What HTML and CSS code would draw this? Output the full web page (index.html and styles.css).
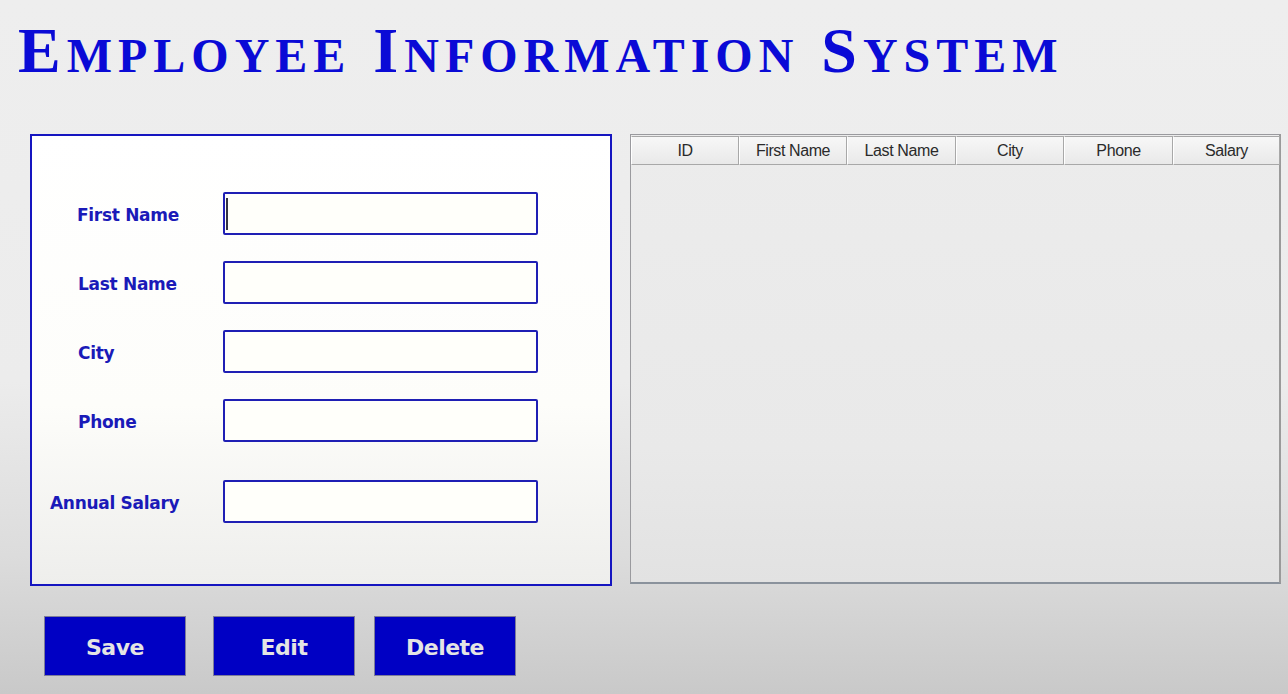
FILE: index.html
```html
<!DOCTYPE html>
<html>
<head>
<meta charset="utf-8">
<link rel="stylesheet" href="styles.css">
</head>
<body>
<h1 class="title"><span class="cap">E</span>mployee <span class="cap">I</span>nformation <span class="cap">S</span>ystem</h1>
<main class="content">
  <section class="form-panel">
    <div class="form-grid">
      <label class="label indent">First Name</label>
      <div class="field"><span class="caret"></span></div>
      <label class="label indent2">Last Name</label>
      <div class="field"></div>
      <label class="label indent2">City</label>
      <div class="field"></div>
      <label class="label indent2">Phone</label>
      <div class="field"></div>
      <label class="label last">Annual Salary</label>
      <div class="field last"></div>
    </div>
  </section>
  <section class="table-panel">
    <div class="thead">
      <div class="th">ID</div>
      <div class="th">First Name</div>
      <div class="th">Last Name</div>
      <div class="th">City</div>
      <div class="th">Phone</div>
      <div class="th">Salary</div>
    </div>
  </section>
</main>
<div class="actions">
  <button class="btn btn-save">Save</button>
  <button class="btn btn-edit">Edit</button>
  <button class="btn btn-delete">Delete</button>
</div>
</body>
</html>
```
FILE: styles.css
```css
html, body {
  margin: 0;
  padding: 0;
  width: 1288px;
  height: 694px;
  overflow: hidden;
}
body {
  background: linear-gradient(to bottom, #eeeeee 0%, #ececec 55%, #dcdcdc 80%, #c9c9c9 100%);
  font-family: "DejaVu Sans", "Liberation Sans", sans-serif;
}
.title {
  margin: 0;
  padding: 19px 0 0 18px;
  height: 112px;
  box-sizing: border-box;
  font-family: "Liberation Serif", serif;
  text-transform: uppercase;
  font-weight: bold;
  font-size: 48px;
  line-height: 64px;
  letter-spacing: 6px;
  word-spacing: 4px;
  color: #0a0ad6;
  white-space: nowrap;
}
.title .cap {
  font-size: 64px;
}
.content {
  display: flex;
  align-items: flex-start;
  padding-top: 22px;
}
.form-panel {
  margin-left: 30px;
  width: 582px;
  height: 452px;
  box-sizing: border-box;
  border: 2px solid #1515c0;
  background: linear-gradient(to bottom, #ffffff 0%, #fdfdfa 60%, #eeeeec 100%);
}
.form-grid {
  display: grid;
  grid-template-columns: 173px 315px;
  grid-auto-rows: 43px;
  row-gap: 26px;
  padding: 56px 0 0 18px;
  align-items: center;
}
.label {
  font-weight: bold;
  font-size: 17px;
  color: #1a1ab8;
  letter-spacing: -0.3px;
  padding-top: 3px;
}
.label.indent { padding-left: 27px; }
.label.indent2 { padding-left: 28px; }
.label.last, .field.last { margin-top: 24px; }
.field {
  height: 43px;
  box-sizing: border-box;
  border: 2px solid #1f1fb4;
  border-radius: 2px;
  background: #fffffa;
  position: relative;
}
.caret {
  position: absolute;
  left: 1px;
  top: 4px;
  width: 2px;
  height: 32px;
  background: #333344;
}
.table-panel {
  margin-left: 18px;
  width: 651px;
  height: 450px;
  box-sizing: border-box;
  border: 1px solid #9a9a9e;
  border-bottom: 2px solid #8a929c;
  border-right: 2px solid #9a9a9a;
  background: linear-gradient(to bottom, #ececec 0%, #e9e9e9 70%, #e2e2e2 100%);
}
.thead {
  display: grid;
  grid-template-columns: 108px 108px 109px 108px 109px 107px;
  height: 27px;
  margin: 1px 0 0 0;
}
.th {
  box-sizing: border-box;
  border: 1px solid #a8a8a8;
  border-left: 1px solid #ffffff;
  background: linear-gradient(to bottom, #f7f7f7, #e9e9e9);
  font-family: "Liberation Sans", Arial, sans-serif;
  font-size: 16px;
  letter-spacing: -0.4px;
  color: #2a2a2a;
  text-align: center;
  line-height: 27px;
}
.actions {
  display: flex;
  padding: 30px 0 0 44px;
}
.btn {
  width: 142px;
  height: 60px;
  box-sizing: border-box;
  border: 1px solid #7d7d99;
  background: #0000c4;
  color: #e4e4e4;
  font-family: "DejaVu Sans", sans-serif;
  font-weight: bold;
  font-size: 22px;
  letter-spacing: -0.5px;
  padding: 3px 0 0 0;
}
.btn-edit { margin-left: 27px; }
.btn-delete { margin-left: 19px; }
```
